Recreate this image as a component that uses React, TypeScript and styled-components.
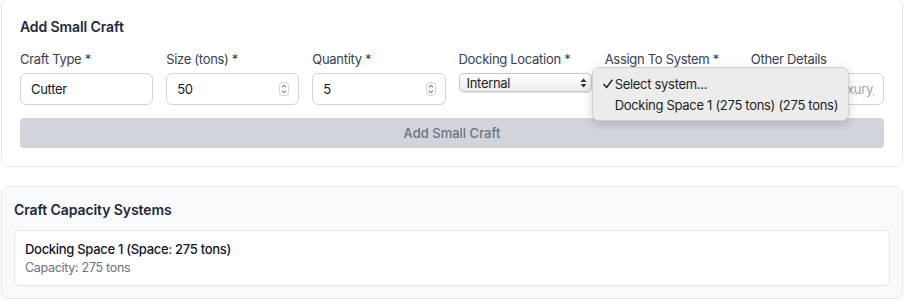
import styled, { createGlobalStyle } from 'styled-components';

const GlobalStyle = createGlobalStyle`
  body {
    margin: 0;
    background: #ffffff;
    font-family: Inter, "Noto Sans", "Liberation Sans", sans-serif;
    letter-spacing: -0.3px;
    -webkit-font-smoothing: antialiased;
  }
`;

const StyledPage = styled.div`
  display: flex;
  flex-direction: column;
  gap: 19px;
  width: 903px;
  margin-top: -2px;
  padding-left: 1px;
  box-sizing: border-box;
`;

const StyledCard = styled.section<{ $muted?: boolean; $pad: string }>`
  display: flex;
  flex-direction: column;
  background: ${(p) => (p.$muted ? '#f9fafb' : '#ffffff')};
  border: 1px solid #e5e7eb;
  border-radius: 8px;
  padding: ${(p) => p.$pad};
`;

const StyledCardTitle = styled.h3<{ $gap: number }>`
  margin: 0 0 ${(p) => p.$gap}px;
  font-size: 14px;
  line-height: 20px;
  font-weight: 600;
  letter-spacing: -0.1px;
  color: #1f2937;
`;

const StyledFieldGrid = styled.div`
  display: grid;
  grid-template-columns: repeat(6, 1fr);
  column-gap: 13px;
  margin-bottom: 13px;
`;

const StyledField = styled.div`
  position: relative;
  display: flex;
  flex-direction: column;
  gap: 5px;
  min-width: 0;
`;

const StyledLabel = styled.label`
  font-size: 13px;
  line-height: 18px;
  color: #374151;
  white-space: nowrap;
`;

const StyledInputBox = styled.div`
  display: flex;
  align-items: center;
  height: 32px;
  padding: 0 9px 0 10px;
  border: 1px solid #d1d5db;
  border-radius: 6px;
  background: #ffffff;
  box-sizing: border-box;
  overflow: hidden;
`;

const StyledInput = styled.input`
  flex: 1;
  min-width: 0;
  border: none;
  outline: none;
  padding: 0;
  background: transparent;
  font: inherit;
  font-size: 13px;
  letter-spacing: -0.3px;
  color: #111827;
  &::placeholder {
    color: #9ca3af;
  }
`;

const StyledNativeSelect = styled.div`
  display: flex;
  align-items: center;
  justify-content: space-between;
  height: 19px;
  padding: 0 4px 0 7px;
  border: 1px solid #c8c8c8;
  border-radius: 5px;
  background: linear-gradient(#ffffff, #ececec);
  box-shadow: 0 0.5px 1px rgba(0, 0, 0, 0.12);
  box-sizing: border-box;
  font-size: 13px;
  color: #222222;
  white-space: nowrap;
`;

const StyledPopup = styled.div`
  position: absolute;
  left: -13px;
  top: 17px;
  width: 257px;
  padding: 5px 0;
  background: #ececec;
  border: 1px solid #d2d2d2;
  border-radius: 7px;
  box-shadow: 0 3px 10px rgba(0, 0, 0, 0.18);
  box-sizing: border-box;
  z-index: 2;
`;

const StyledOption = styled.div`
  display: flex;
  align-items: center;
  height: 21px;
  padding-left: 10px;
  font-size: 13px;
  color: #1f1f1f;
  white-space: nowrap;
`;

const StyledCheck = styled.span`
  display: flex;
  align-items: center;
  width: 12px;
`;

const StyledSubmit = styled.button`
  height: 30px;
  border: none;
  border-radius: 4px;
  background: #d1d5db;
  font: inherit;
  font-size: 13px;
  font-weight: 500;
  color: #6b7280;
`;

const StyledSystemItem = styled.div`
  display: flex;
  flex-direction: column;
  padding: 9px 10px;
  background: #ffffff;
  border: 1px solid #e5e7eb;
  border-radius: 4px;
`;

const StyledSystemName = styled.div`
  font-size: 13px;
  line-height: 19px;
  font-weight: 500;
  color: #111827;
`;

const StyledSystemMeta = styled.div`
  font-size: 12.5px;
  line-height: 17px;
  color: #6b7280;
`;

const Spinner = () => (
  <svg width="10" height="14" viewBox="0 0 10 14">
    <rect x="0.5" y="0.5" width="9" height="13" rx="3" fill="#fafafa" stroke="#d4d4d4" />
    <path d="M3 5.2 L5 3.4 L7 5.2" fill="none" stroke="#555" strokeWidth="1" />
    <path d="M3 8.8 L5 10.6 L7 8.8" fill="none" stroke="#555" strokeWidth="1" />
  </svg>
);

const UpDown = () => (
  <svg width="7" height="10" viewBox="0 0 7 10">
    <path d="M3.5 0.5 L6.5 4 H0.5 Z" fill="#333" />
    <path d="M3.5 9.5 L6.5 6 H0.5 Z" fill="#333" />
  </svg>
);

const Check = () => (
  <svg width="10" height="10" viewBox="0 0 10 10">
    <path d="M1 5.4 L3.7 8.4 L9 1.2" fill="none" stroke="#1f1f1f" strokeWidth="1.5" strokeLinecap="round" strokeLinejoin="round" />
  </svg>
);

const TextField = ({ label, value, placeholder, spin }: { label: string; value?: string; placeholder?: string; spin?: boolean }) => (
  <StyledField>
    <StyledLabel>{label}</StyledLabel>
    <StyledInputBox>
      <StyledInput defaultValue={value} placeholder={placeholder} />
      {spin && <Spinner />}
    </StyledInputBox>
  </StyledField>
);

const App = () => {
  return (
    <>
      <GlobalStyle />
      <StyledPage>
        <StyledCard $pad="18px">
          <StyledCardTitle $gap={13}>Add Small Craft</StyledCardTitle>
          <StyledFieldGrid>
            <TextField label="Craft Type *" value="Cutter" />
            <TextField label="Size (tons) *" value="50" spin />
            <TextField label="Quantity *" value="5" spin />
            <StyledField>
              <StyledLabel>Docking Location *</StyledLabel>
              <StyledNativeSelect>
                Internal
                <UpDown />
              </StyledNativeSelect>
            </StyledField>
            <StyledField>
              <StyledLabel>Assign To System *</StyledLabel>
              {/* the open menu covers the closed select completely */}
              <StyledNativeSelect />
              <StyledPopup>
                <StyledOption>
                  <StyledCheck>
                    <Check />
                  </StyledCheck>
                  Select system...
                </StyledOption>
                <StyledOption>
                  <StyledCheck />
                  Docking Space 1 (275 tons) (275 tons)
                </StyledOption>
              </StyledPopup>
            </StyledField>
            <TextField label="Other Details" placeholder="e.g., Armed, luxury, medical" />
          </StyledFieldGrid>
          <StyledSubmit disabled>Add Small Craft</StyledSubmit>
        </StyledCard>

        <StyledCard $muted $pad="13px 12px 12px">
          <StyledCardTitle $gap={10}>Craft Capacity Systems</StyledCardTitle>
          <StyledSystemItem>
            <StyledSystemName>Docking Space 1 (Space: 275 tons)</StyledSystemName>
            <StyledSystemMeta>Capacity: 275 tons</StyledSystemMeta>
          </StyledSystemItem>
        </StyledCard>
      </StyledPage>
    </>
  );
};

export default App;
